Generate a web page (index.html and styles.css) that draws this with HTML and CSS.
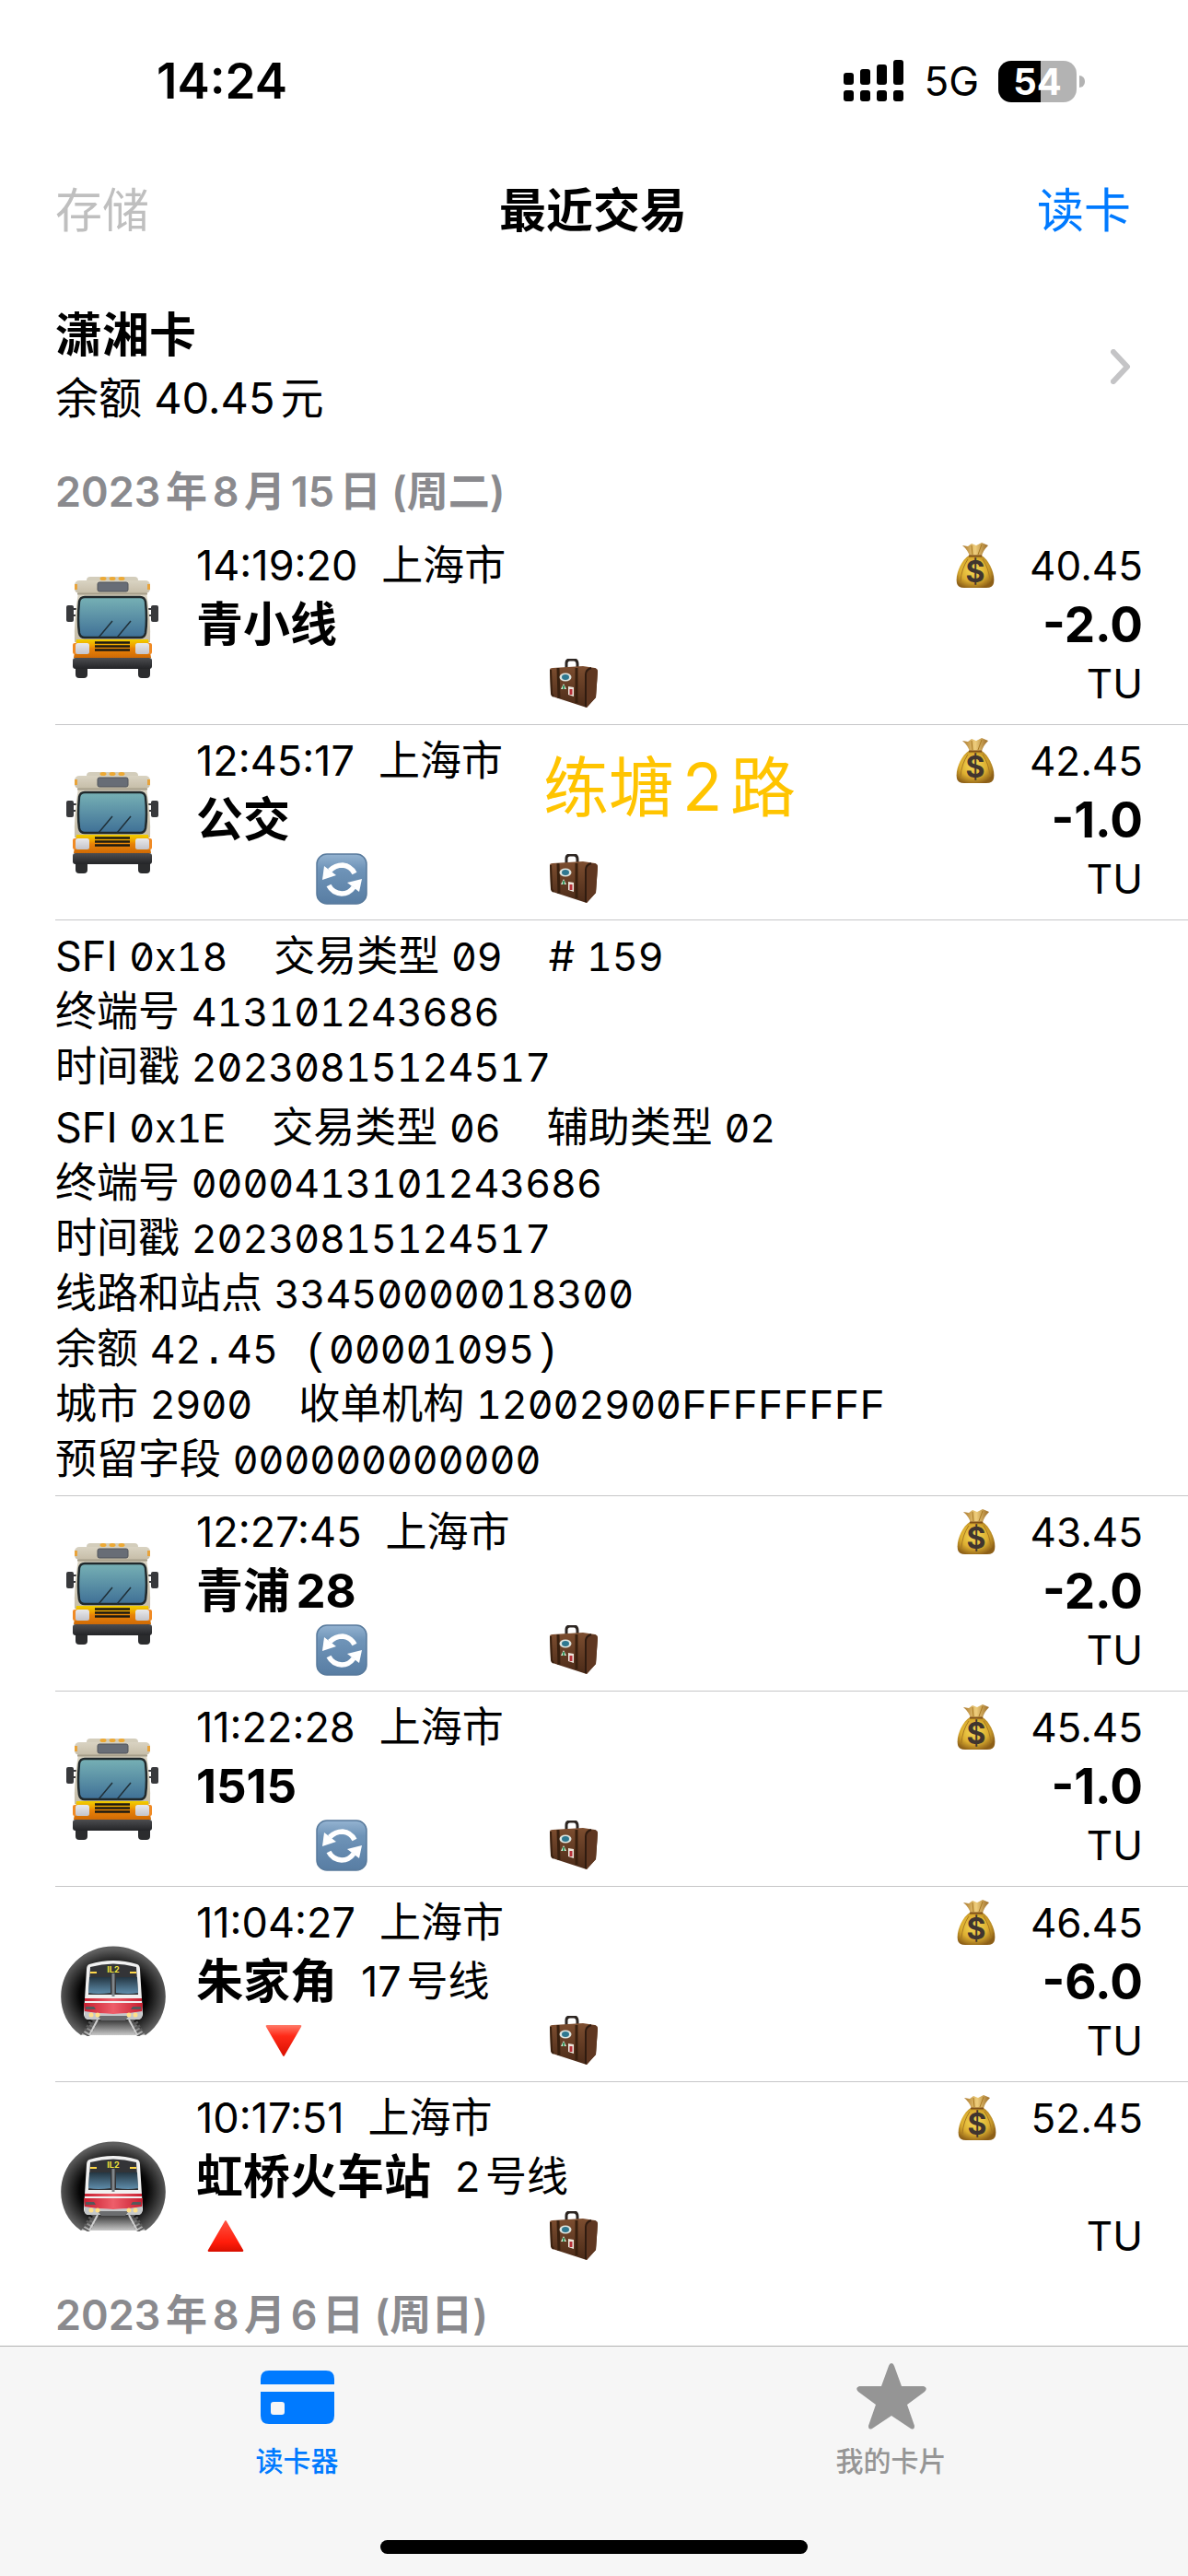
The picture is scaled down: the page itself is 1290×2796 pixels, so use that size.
FILE: index.html
```html
<!DOCTYPE html>
<html lang="zh-CN">
<head>
  <meta charset="UTF-8">
  <meta name="viewport" content="width=device-width, initial-scale=1.0">
  <title>最近交易</title>
  <link rel="stylesheet" href="styles.css">
</head>
<body>
  <!-- Icon gradients: this svg has to stay rendered, or the fills go missing -->
  <svg class="gradients" aria-hidden="true">
    <defs>
      <linearGradient id="glass" x1="0" y1="0" x2="0" y2="1">
        <stop offset="0" stop-color="#77b1b5"/><stop offset="1" stop-color="#3f7096"/>
      </linearGradient>
      <linearGradient id="busBody" x1="0" y1="0" x2="0" y2="1">
        <stop offset="0" stop-color="#d9d3c2"/><stop offset="1" stop-color="#c6bda8"/>
      </linearGradient>
      <linearGradient id="busFront" x1="0" y1="0" x2="0" y2="1">
        <stop offset="0" stop-color="#f0d000"/><stop offset=".35" stop-color="#f0a000"/><stop offset=".5" stop-color="#e88208"/><stop offset="1" stop-color="#cf6a05"/>
      </linearGradient>
      <linearGradient id="lamp" x1="0" y1="0" x2="0" y2="1">
        <stop offset="0" stop-color="#e9e9ec"/><stop offset="1" stop-color="#c4c4ca"/>
      </linearGradient>
      <linearGradient id="bumper" x1="0" y1="0" x2="0" y2="1">
        <stop offset="0" stop-color="#4c4d50"/><stop offset="1" stop-color="#232427"/>
      </linearGradient>
      <radialGradient id="tunnel" cx=".5" cy=".55" r=".52">
        <stop offset="0" stop-color="#000"/><stop offset=".62" stop-color="#050505"/><stop offset="1" stop-color="#5e5e5e"/>
      </radialGradient>
      <linearGradient id="floor" x1="0" y1="0" x2="0" y2="1">
        <stop offset="0" stop-color="#222"/><stop offset="1" stop-color="#c8c8c8"/>
      </linearGradient>
      <linearGradient id="trainGlass" x1="0" y1="0" x2="0" y2="1">
        <stop offset="0" stop-color="#243642"/><stop offset="1" stop-color="#5f8dab"/>
      </linearGradient>
      <linearGradient id="trainRed" x1="0" y1="0" x2="1" y2="0">
        <stop offset="0" stop-color="#c81e30"/><stop offset=".5" stop-color="#ee5e6a"/><stop offset="1" stop-color="#c81e30"/>
      </linearGradient>
      <radialGradient id="gold" cx=".45" cy=".45" r=".6">
        <stop offset="0" stop-color="#f7dc58"/><stop offset=".6" stop-color="#dcae30"/><stop offset="1" stop-color="#8d5f17"/>
      </radialGradient>
      <linearGradient id="neck" x1="0" y1="0" x2="1" y2="0">
        <stop offset="0" stop-color="#a8762c"/><stop offset=".5" stop-color="#efce7c"/><stop offset="1" stop-color="#9a6a26"/>
      </linearGradient>
      <linearGradient id="leather" x1="0" y1="0" x2="0" y2="1">
        <stop offset="0" stop-color="#7d4e30"/><stop offset="1" stop-color="#4a2a18"/>
      </linearGradient>
      <linearGradient id="blueKey" x1="0" y1="0" x2="0" y2="1">
        <stop offset="0" stop-color="#94b3d1"/><stop offset=".3" stop-color="#6f94b8"/><stop offset="1" stop-color="#587da3"/>
      </linearGradient>
      <linearGradient id="redDown" x1="0" y1="0" x2="0" y2="1">
        <stop offset="0" stop-color="#ff7a68"/><stop offset=".35" stop-color="#ff2a18"/><stop offset="1" stop-color="#d80f00"/>
      </linearGradient>
      <linearGradient id="redUp" x1="0" y1="0" x2="0" y2="1">
        <stop offset="0" stop-color="#ff5240"/><stop offset=".7" stop-color="#ff1c0a"/><stop offset="1" stop-color="#d80f00"/>
      </linearGradient>
    </defs>
  </svg>

  <!-- Shared icons -->
  <svg class="sprite" aria-hidden="true">
    <symbol id="bus" viewBox="0 0 100 112">
      <rect x="10" y="92" width="13" height="19" rx="4" fill="#2b2c2e"/>
      <rect x="78" y="92" width="13" height="19" rx="4" fill="#2b2c2e"/>
      <path d="M22 5Q22 1 26 1H74Q78 1 78 5V10H22z" fill="#d3cdbb"/>
      <g fill="#eda934"><ellipse cx="40" cy="3" rx="3.5" ry="2"/><ellipse cx="50" cy="3" rx="3.5" ry="2"/><ellipse cx="60" cy="3" rx="3.5" ry="2"/></g>
      <rect x="0" y="32" width="8" height="18" rx="2" fill="#38393c"/>
      <rect x="92" y="32" width="8" height="18" rx="2" fill="#38393c"/>
      <path d="M8 36h5M8 43h5M87 36h5M87 43h5" stroke="#38393c" stroke-width="2"/>
      <path d="M13 18H87Q92 50 91 72H9Q8 50 13 18z" fill="url(#busBody)"/>
      <rect x="9" y="5" width="82" height="14" rx="5" fill="url(#busBody)"/>
      <path d="M12 19.500H88" stroke="#a69e8a" stroke-width="2"/>
      <rect x="9" y="9" width="3" height="6" fill="#e8a33b"/><rect x="88" y="9" width="3" height="6" fill="#e8a33b"/>
      <rect x="34" y="7" width="33" height="10" rx="2" fill="#686d76" stroke="#50545b"/>
      <path d="M20 23H80Q85 23 86 28Q88 48 86 62Q85 67 80 67H20Q15 67 14 62Q12 48 14 28Q15 23 20 23z" fill="url(#glass)" stroke="#20292c" stroke-width="2.500"/>
      <path d="M35 67L50 49M55 67L70 49" stroke="#203038" stroke-width="1.500"/>
      <path d="M11 69H89L92 89H8z" fill="url(#busFront)"/>
      <path d="M31 72.500H69M31 76.500H69M31 80.500H69" stroke="#1c1a12" stroke-width="2.500"/>
      <rect x="7" y="73" width="6" height="12" rx="2" fill="#f08a24"/><rect x="87" y="73" width="6" height="12" rx="2" fill="#f08a24"/>
      <rect x="10" y="73" width="15" height="12" rx="2.500" fill="url(#lamp)"/><rect x="75" y="73" width="15" height="12" rx="2.500" fill="url(#lamp)"/>
      <rect x="7" y="89" width="86" height="12" rx="3" fill="url(#bumper)"/>
    </symbol>

    <symbol id="metro" viewBox="0 0 114 98">
      <path d="M22 97C-6 78-6 38 16 17C38-5 76-5 98 17C120 38 120 78 92 97z" fill="url(#tunnel)"/>
      <path d="M38 78H76L92 97H22z" fill="url(#floor)"/>
      <path d="M37 80L27 97M77 80L87 97" stroke="#5a5a5a" stroke-width="9" stroke-dasharray="2.500 2"/>
      <path d="M40 80L31 97M74 80L83 97" stroke="#cfcfcf" stroke-width="2"/>
      <path d="M31 20Q57 12 83 20Q86 21 86 26L89 74Q89 79 84 80H30Q25 79 25 74L28 26Q28 21 31 20z" fill="#f1f1f1"/>
      <path d="M32 23Q57 16 82 23L84 53H30z" fill="#333437"/>
      <path d="M31 34H54V51Q40 53 30 51zM60 34H83L84 51Q74 53 60 51z" fill="url(#trainGlass)"/>
      <path d="M57 30V55" stroke="#81868a" stroke-width="3"/>
      <rect x="32" y="28" width="7" height="2" fill="#ffd84a"/><rect x="75" y="28" width="7" height="2" fill="#ffd84a"/>
      <text x="57" y="29" class="metro-sign">IL2</text>
      <path d="M26 57H88V60H26zM25 62H89L88 72Q57 76 26 72z" fill="url(#trainRed)"/>
      <path d="M26 71Q57 77 88 71V76Q88 80 84 80H30Q26 80 26 76z" fill="#c5c8ca"/>
      <path d="M40 76H74L70 81H44z" fill="#6b6d6f"/>
      <path d="M27 66h9l2 3H27zM87 66h-9l-2 3h11z" fill="#55585b"/>
      <g fill="#ffe08a"><circle cx="33" cy="75" r="2.500"/><circle cx="40" cy="75" r="2.500"/><circle cx="74" cy="75" r="2.500"/><circle cx="81" cy="75" r="2.500"/></g>
    </symbol>

    <symbol id="bag" viewBox="0 0 42 50">
      <path d="M7 3L13 4L17 1L22 3L28 0L35 3Q29 9 28 15H15Q13 8 7 3z" fill="url(#neck)"/>
      <path d="M14 14H28C36 19 43 34 41 44Q40 49 33 49H9Q2 49 1 44C-1 34 6 19 14 14z" fill="url(#gold)"/>
      <path d="M13 18Q6 28 5 42M29 18Q36 28 37 42M17 3L18 13M28 2L24 13" stroke="#a87922" fill="none"/>
      <path d="M14 14.500H28" stroke="#805019" stroke-width="2"/>
      <text x="21" y="43" class="bag-sign">$</text>
    </symbol>

    <symbol id="suitcase" viewBox="0 0 54 54">
      <path d="M19 11V5Q19 1 23 1H27Q31 1 31 6V10" fill="none" stroke="#2c2521" stroke-width="3"/>
      <path d="M1 12Q1 10 4 10L37 8L50 10Q53 11 53 14L51 42L41 53L4 41Q2 40 2 37z" fill="url(#leather)"/>
      <path d="M40 14Q41 10 50 10Q53 11 53 14L51 42L41 53L39 52z" fill="#5f3721"/>
      <path d="M40 52V17Q40 12 46 10" fill="none" stroke="#2f1b10" stroke-width="2"/>
      <path d="M10 10L11 43M30 10V48" stroke="#38200f" stroke-width="3"/>
      <path d="M2 12L3 38L5 41" stroke="#38200f" stroke-width="2" fill="none"/>
      <ellipse cx="18" cy="20" rx="6.500" ry="4.500" fill="#dfe5df"/><ellipse cx="18" cy="20" rx="4" ry="3" fill="#2f7890"/>
      <path d="M16 27L19 33L13 33z" fill="#d9e8d8"/><path d="M16 29v4" stroke="#3c9a61" stroke-width="2"/>
      <path d="M21 30L27 31V41L21 39z" fill="#ece6dc"/><path d="M24 33V39" stroke="#b8313a" stroke-width="3"/>
    </symbol>

    <symbol id="refresh" viewBox="0 0 56 56">
      <rect x="1" y="1" width="54" height="54" rx="11" fill="url(#blueKey)" stroke="#587a9c" stroke-width="1.500"/>
      <path d="M15 19Q21 13 29 13Q38 14 42 22" fill="none" stroke="#fff" stroke-width="5.500"/>
      <path d="M9 14L7 29L22 24z" fill="#fff"/>
      <path d="M41 37Q36 44 28 44Q18 43 14 35" fill="none" stroke="#fff" stroke-width="5.500"/>
      <path d="M34 32L50 28L47 42z" fill="#fff"/>
    </symbol>

    <symbol id="down" viewBox="0 0 40 36">
      <path d="M2 1H38Q40 1 39 3L21 34Q20 36 19 34L1 3Q0 1 2 1z" fill="url(#redDown)"/>
    </symbol>
    <symbol id="up" viewBox="0 0 40 36">
      <path d="M2 35H38Q40 35 39 33L21 2Q20 0 19 2L1 33Q0 35 2 35z" fill="url(#redUp)"/>
    </symbol>
  </svg>

  <div class="app">
    <div class="status-bar">
      <span class="status-time">14:24</span>
      <div class="status-right">
        <svg class="signal" viewBox="0 0 66 46" aria-hidden="true">
          <rect x="0" y="14" width="11" height="13" rx="3"/><rect x="18" y="10" width="11" height="17" rx="3"/>
          <rect x="36" y="5" width="11" height="22" rx="3"/><rect x="54" y="0" width="11" height="27" rx="3"/>
          <rect x="0" y="33" width="11" height="12" rx="3"/><rect x="18" y="33" width="11" height="12" rx="3"/>
          <rect x="36" y="33" width="11" height="12" rx="3"/><rect x="54" y="33" width="11" height="12" rx="3"/>
        </svg>
        <span class="network">5G</span>
        <span class="battery">54</span>
      </div>
    </div>

    <header class="nav">
      <button class="nav-button" disabled>存储</button>
      <h1 class="nav-title">最近交易</h1>
      <button class="nav-button nav-button-right">读卡</button>
    </header>

    <main class="content">
      <a class="card" href="#card">
        <span class="card-text">
          <strong class="card-name">潇湘卡</strong>
          <span class="card-balance">余额 40.45元</span>
        </span>
        <svg class="chevron" viewBox="0 0 22 38" aria-hidden="true"><path d="M3 3L18 19L3 35"/></svg>
      </a>

      <h2 class="day">2023年8月15日 (周二)</h2>
      <ul class="list">
        <li class="row">
          <svg class="vehicle"><use href="#bus"/></svg>
          <div class="info">
            <div class="line"><span>14:19:20</span><span>上海市</span></div>
            <div class="line"><strong class="name">青小线</strong></div>
            <div class="flags"><svg class="flag flag-case"><use href="#suitcase"/></svg></div>
          </div>
          <div class="amounts">
            <div class="line"><svg class="money"><use href="#bag"/></svg><span>40.45</span></div>
            <strong class="amount">-2.0</strong>
            <span class="type">TU</span>
          </div>
        </li>
        <li class="row">
          <svg class="vehicle"><use href="#bus"/></svg>
          <div class="info">
            <div class="line"><span>12:45:17</span><span>上海市</span></div>
            <div class="line"><strong class="name">公交</strong></div>
            <div class="flags"><svg class="flag flag-refresh"><use href="#refresh"/></svg><svg class="flag flag-case"><use href="#suitcase"/></svg></div>
          </div>
          <div class="amounts">
            <div class="line"><svg class="money"><use href="#bag"/></svg><span>42.45</span></div>
            <strong class="amount">-1.0</strong>
            <span class="type">TU</span>
          </div>
          <span class="note">练塘2路</span>
        </li>
        <li class="detail">
          <div class="record">
            <p><span>SFI <code>0x18</code></span><span>交易类型 <code>09</code></span><span># <code>159</code></span></p>
            <p><span>终端号 <code>413101243686</code></span></p>
            <p><span>时间戳 <code>20230815124517</code></span></p>
          </div>
          <div class="record">
            <p><span>SFI <code>0x1E</code></span><span>交易类型 <code>06</code></span><span>辅助类型 <code>02</code></span></p>
            <p><span>终端号 <code>0000413101243686</code></span></p>
            <p><span>时间戳 <code>20230815124517</code></span></p>
            <p><span>线路和站点 <code>33450000018300</code></span></p>
            <p><span>余额 <code>42<span class="fixed">.</span>45<span class="fixed"> (</span>00001095<span class="fixed">)</span></code></span></p>
            <p><span>城市 <code>2900</code></span><span>收单机构 <code>12002900<span class="fixed">FFFFFFFF</span></code></span></p>
            <p><span>预留字段 <code>000000000000</code></span></p>
          </div>
        </li>
        <li class="row">
          <svg class="vehicle"><use href="#bus"/></svg>
          <div class="info">
            <div class="line"><span>12:27:45</span><span>上海市</span></div>
            <div class="line"><strong class="name">青浦28</strong></div>
            <div class="flags"><svg class="flag flag-refresh"><use href="#refresh"/></svg><svg class="flag flag-case"><use href="#suitcase"/></svg></div>
          </div>
          <div class="amounts">
            <div class="line"><svg class="money"><use href="#bag"/></svg><span>43.45</span></div>
            <strong class="amount">-2.0</strong>
            <span class="type">TU</span>
          </div>
        </li>
        <li class="row">
          <svg class="vehicle"><use href="#bus"/></svg>
          <div class="info">
            <div class="line"><span>11:22:28</span><span>上海市</span></div>
            <div class="line"><strong class="name">1515</strong></div>
            <div class="flags"><svg class="flag flag-refresh"><use href="#refresh"/></svg><svg class="flag flag-case"><use href="#suitcase"/></svg></div>
          </div>
          <div class="amounts">
            <div class="line"><svg class="money"><use href="#bag"/></svg><span>45.45</span></div>
            <strong class="amount">-1.0</strong>
            <span class="type">TU</span>
          </div>
        </li>
        <li class="row">
          <svg class="vehicle metro"><use href="#metro"/></svg>
          <div class="info">
            <div class="line"><span>11:04:27</span><span>上海市</span></div>
            <div class="line"><strong class="name">朱家角</strong><span>17号线</span></div>
            <div class="flags"><svg class="flag flag-down"><use href="#down"/></svg><svg class="flag flag-case"><use href="#suitcase"/></svg></div>
          </div>
          <div class="amounts">
            <div class="line"><svg class="money"><use href="#bag"/></svg><span>46.45</span></div>
            <strong class="amount">-6.0</strong>
            <span class="type">TU</span>
          </div>
        </li>
        <li class="row">
          <svg class="vehicle metro"><use href="#metro"/></svg>
          <div class="info">
            <div class="line"><span>10:17:51</span><span>上海市</span></div>
            <div class="line"><strong class="name">虹桥火车站</strong><span>2号线</span></div>
            <div class="flags"><svg class="flag flag-up"><use href="#up"/></svg><svg class="flag flag-case"><use href="#suitcase"/></svg></div>
          </div>
          <div class="amounts">
            <div class="line"><svg class="money"><use href="#bag"/></svg><span>52.45</span></div>
            <strong class="amount"></strong>
            <span class="type">TU</span>
          </div>
        </li>
      </ul>
      <h2 class="day">2023年8月6日 (周日)</h2>
    </main>

    <nav class="tab-bar">
      <div class="tabs">
        <button class="tab active">
          <svg class="tab-icon" viewBox="0 0 80 72" aria-hidden="true">
            <path d="M0 23V17Q0 8 9 8H71Q80 8 80 17V23zM0 31H80V57Q80 66 71 66H9Q0 66 0 57zM14 42Q11 42 11 45V53Q11 56 14 56H23Q26 56 26 53V45Q26 42 23 42z" fill-rule="evenodd"/>
          </svg>
          <span>读卡器</span>
        </button>
        <button class="tab">
          <svg class="tab-icon" viewBox="0 0 80 72" aria-hidden="true">
            <path d="M40 0Q42 0 43 3L51 25H75Q80 27 76 31L57 45L65 68Q65 73 61 71L40 57L19 71Q15 73 15 68L23 45L4 31Q0 27 5 25H29L37 3Q38 0 40 0z"/>
          </svg>
          <span>我的卡片</span>
        </button>
      </div>
      <div class="home-indicator"></div>
    </nav>
  </div>
</body>
</html>
```
FILE: styles.css
```css
/* Base */
* {
  box-sizing: border-box;
}
body, html {
  margin: 0;
  padding: 0;
  height: 100%;
  font-family: Inter, "Noto Sans CJK SC", sans-serif;
  font-size: 45px;
  background-color: #fff;
  color: #000;
  text-autospace: normal;
}
h1, h2, p, ul {
  margin: 0;
  padding: 0;
}
button {
  border: none;
  background: none;
  padding: 0;
  font-family: inherit;
}
.gradients {
  position: absolute;
  width: 0;
  height: 0;
}
.sprite {
  display: none;
}
.app {
  height: 100%;
  display: flex;
  flex-direction: column;
}

/* Status bar */
.status-bar {
  display: flex;
  justify-content: space-between;
  align-items: center;
  padding: 56px 112px 0 170px;
  height: 120px;
}
.status-time {
  font-size: 53px;
  font-weight: 600;
}
.status-right {
  display: flex;
  align-items: center;
  gap: 21px;
}
.signal {
  width: 66px;
  height: 46px;
}
.network {
  font-size: 44px;
}
.battery {
  position: relative;
  width: 85px;
  height: 45px;
  margin-right: 9px;
  border-radius: 14px;
  background: linear-gradient(to right, #000 54%, #b3b3b3 54%);
  color: #fff;
  font-size: 40px;
  font-weight: 700;
  line-height: 45px;
  text-align: center;
}
.battery::after {
  content: "";
  position: absolute;
  right: -9px;
  top: 16px;
  width: 6px;
  height: 13px;
  border-radius: 0 6px 6px 0;
  background: #b3b3b3;
}

/* Navigation */
.nav {
  display: grid;
  grid-template-columns: 1fr auto 1fr;
  align-items: center;
  height: 210px;
  padding: 0 62px 0 60px;
}
.nav-button {
  justify-self: start;
  font-size: 51px;
  color: #007aff;
}
.nav-button:disabled {
  color: #bfbfbf;
}
.nav-button-right {
  justify-self: end;
}
.nav-title {
  font-size: 51px;
  font-weight: 600;
}

/* List */
.content {
  flex: 1;
  min-height: 0;
  overflow-y: auto;
  scrollbar-width: none;
}
.card {
  display: flex;
  justify-content: space-between;
  align-items: center;
  height: 163px;
  padding: 0 62px 27px 60px;
  color: inherit;
  text-decoration: none;
}
.card-text {
  display: flex;
  flex-direction: column;
}
.card-name {
  font-size: 51px;
  line-height: 68px;
}
.card-balance {
  font-size: 47px;
  line-height: 68px;
}
.chevron {
  width: 22px;
  height: 38px;
  fill: none;
  stroke: #c4c4c6;
  stroke-width: 6px;
  stroke-linecap: round;
  stroke-linejoin: round;
}
.day {
  height: 82px;
  padding-left: 60px;
  font-size: 45px;
  font-weight: 600;
  line-height: 82px;
  color: #8a8a8e;
}
.list {
  list-style: none;
  padding-left: 60px;
}
.row {
  position: relative;
  display: flex;
  align-items: center;
  height: 212px;
  padding: 7px 49px 12px 0;
  border-bottom: 1px solid #c6c6c8;
}
.row:last-child {
  border-bottom-color: transparent;
}
.vehicle {
  width: 124px;
  height: 112px;
  margin-top: 6px;
}
.vehicle.metro {
  width: 114px;
  height: 98px;
  margin: 20px 4px 0 6px;
}
.info {
  flex: 1;
  margin-left: 29px;
}
.line {
  display: flex;
  align-items: center;
  gap: 26px;
  height: 64px;
  line-height: 64px;
  white-space: nowrap;
}
.name {
  font-size: 51px;
}
/* one column per kind of flag */
.flags {
  display: grid;
  grid-template-columns: repeat(8, 63px);
  align-items: center;
  justify-items: center;
  height: 64px;
}
.flag {
  width: 40px;
  height: 36px;
  grid-row: 1;
}
.flag-up {
  grid-column: 1;
}
.flag-down {
  grid-column: 2;
}
.flag-refresh {
  grid-column: 3;
  width: 56px;
  height: 56px;
}
.flag-case {
  grid-column: 7;
  width: 54px;
  height: 54px;
}
.amounts {
  display: flex;
  flex-direction: column;
  align-items: flex-end;
  font-size: 44px;
  line-height: 64px;
}
.amounts .line {
  gap: 38px;
}
.money {
  width: 42px;
  height: 50px;
}
.amount {
  height: 64px;
  font-size: 53px;
}
.note {
  position: absolute;
  left: 530px;
  top: 15px;
  font-size: 71px;
  line-height: 104px;
  color: #ffc400;
}
.metro-sign {
  font: 700 9px Inter, sans-serif;
  text-anchor: middle;
  fill: #f2e53a;
}
.bag-sign {
  font: 700 32px Inter, sans-serif;
  text-anchor: middle;
  fill: #40352f;
}

/* Raw card record */
.detail {
  padding: 9px 0;
  border-bottom: 1px solid #c6c6c8;
}
.record + .record {
  margin-top: 6px;
}
.record p {
  display: flex;
  gap: 50px;
  line-height: 60px;
  white-space: nowrap;
}
code {
  font-family: Inter, monospace;
  font-size: 43px;
  font-feature-settings: "tnum", "zero";
}
/* punctuation and hex letters keep the digit width */
.fixed {
  font-family: "Liberation Mono", monospace;
  font-size: 46px;
  line-height: 1;
}

/* Tab bar */
.tab-bar {
  height: 250px;
  border-top: 1px solid #b2b2b2;
  background: #f6f6f6;
  display: flex;
  flex-direction: column;
  align-items: center;
  justify-content: space-between;
  padding: 18px 0 24px;
}
.tabs {
  display: flex;
  width: 100%;
}
.tab {
  flex: 1;
  display: flex;
  flex-direction: column;
  align-items: center;
  gap: 10px;
  font-size: 30px;
  font-weight: 500;
  color: #959595;
}
.tab.active {
  color: #007aff;
}
.tab-icon {
  width: 80px;
  height: 72px;
  fill: currentColor;
}
.home-indicator {
  width: 36%;
  height: 15px;
  border-radius: 8px;
  background: #000;
}
```
